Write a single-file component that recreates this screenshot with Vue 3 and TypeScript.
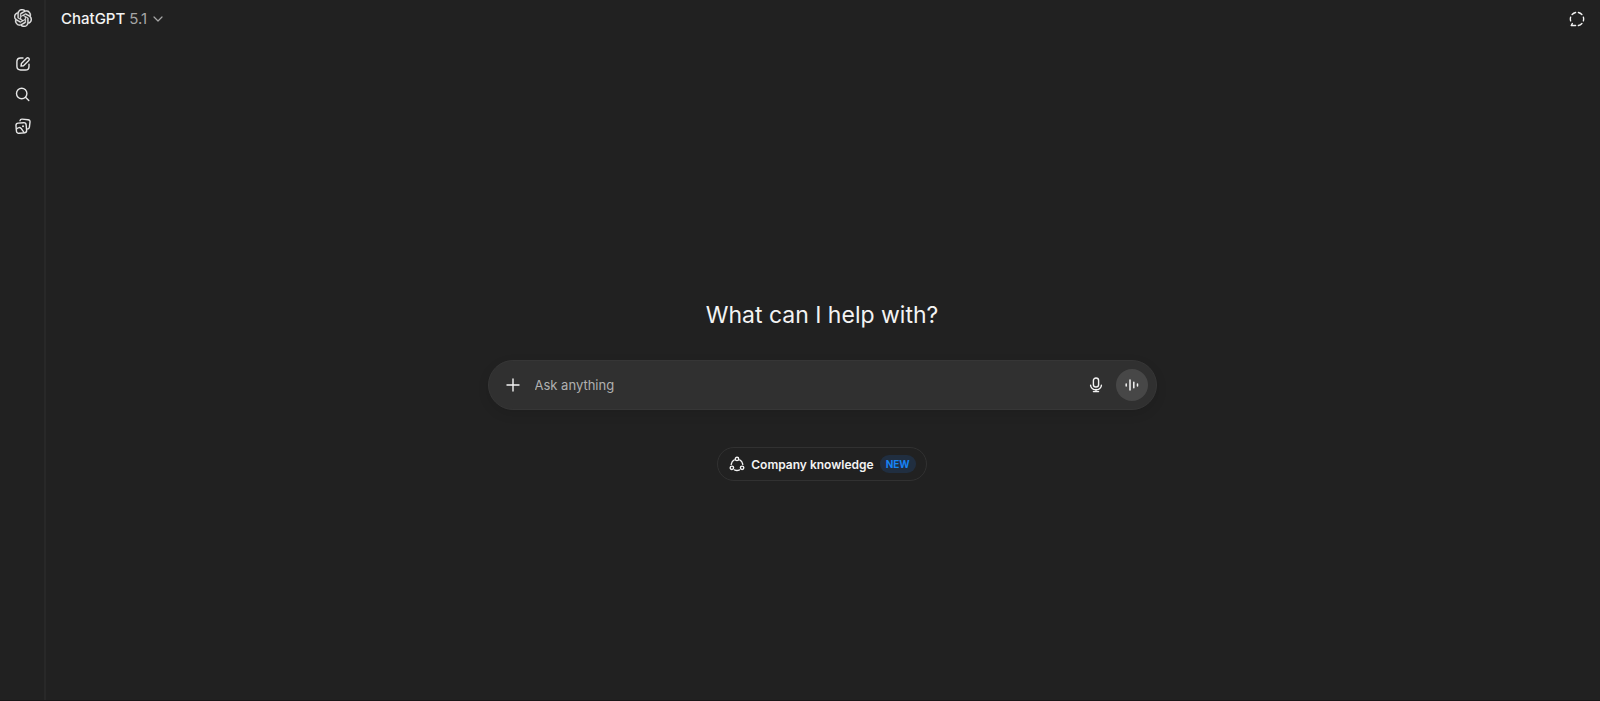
<script setup lang="ts">
import { ref } from 'vue'

const model = { name: 'ChatGPT', version: '5.1' }
const prompt = ref('')
</script>

<template>
  <div class="app">
    <nav class="rail" aria-label="Sidebar">
      <a class="rail-item logo" href="#" aria-label="Home">
        <svg class="logo-icon" viewBox="0 0 24 24" fill="currentColor" stroke="currentColor" stroke-width="0.4">
          <path d="M22.2819 9.8211a5.9847 5.9847 0 0 0-.5157-4.9108 6.0462 6.0462 0 0 0-6.5098-2.9A6.0651 6.0651 0 0 0 4.9807 4.1818a5.9847 5.9847 0 0 0-3.9977 2.9 6.0462 6.0462 0 0 0 .7427 7.0966 5.98 5.98 0 0 0 .511 4.9107 6.051 6.051 0 0 0 6.5146 2.9001A5.9847 5.9847 0 0 0 13.2599 24a6.0557 6.0557 0 0 0 5.7718-4.2058 5.9894 5.9894 0 0 0 3.9977-2.9001 6.0557 6.0557 0 0 0-.7475-7.073zm-9.022 12.6081a4.4755 4.4755 0 0 1-2.8764-1.0408l.1419-.0804 4.7783-2.7582a.7948.7948 0 0 0 .3927-.6813v-6.7369l2.02 1.1686a.071.071 0 0 1 .038.052v5.5826a4.504 4.504 0 0 1-4.4945 4.4944zm-9.6607-4.1254a4.4708 4.4708 0 0 1-.5346-3.0137l.142.0852 4.783 2.7582a.7712.7712 0 0 0 .7806 0l5.8428-3.3685v2.3324a.0804.0804 0 0 1-.0332.0615L9.74 19.9502a4.4992 4.4992 0 0 1-6.1408-1.6464zM2.3408 7.8956a4.485 4.485 0 0 1 2.3655-1.9728V11.6a.7664.7664 0 0 0 .3879.6765l5.8144 3.3543-2.0201 1.1685a.0757.0757 0 0 1-.071 0l-4.8303-2.7865A4.504 4.504 0 0 1 2.3408 7.872zm16.5963 3.8558L13.1038 8.364 15.1192 7.2a.0757.0757 0 0 1 .071 0l4.8303 2.7913a4.4944 4.4944 0 0 1-.6765 8.1042v-5.6772a.79.79 0 0 0-.407-.667zm2.0107-3.0231l-.142-.0852-4.7735-2.7818a.7759.7759 0 0 0-.7854 0L9.409 9.2297V6.8974a.0662.0662 0 0 1 .0284-.0615l4.8303-2.7866a4.4992 4.4992 0 0 1 6.6802 4.66zM8.3065 12.863l-2.02-1.1638a.0804.0804 0 0 1-.038-.0567V6.0742a4.4992 4.4992 0 0 1 7.3757-3.4537l-.142.0805L8.704 5.459a.7948.7948 0 0 0-.3927.6813zm1.0976-2.3654l2.602-1.4998 2.6069 1.4998v2.9994l-2.5974 1.4997-2.6067-1.4997Z" />
        </svg>
      </a>
      <button class="rail-item" type="button" aria-label="New chat">
        <svg class="icon" viewBox="0 0 16 16">
          <path d="M8 2H5.600C3.100 2 1.900 3.200 1.900 5.600v4.700C1.900 12.800 3.100 14 5.600 14h4.700c2.500 0 3.700-1.200 3.700-3.600V8.200" />
          <path d="M6 10.100l.4-2.500 5.200-5.300a1.500 1.500 0 0 1 2.200 2.200L8.500 9.700z" />
        </svg>
      </button>
      <button class="rail-item" type="button" aria-label="Search chats">
        <svg class="icon" viewBox="0 0 16 16">
          <circle cx="6.700" cy="6.500" r="5.200" />
          <path d="M10.500 10.300l3.300 3.300" />
        </svg>
      </button>
      <button class="rail-item" type="button" aria-label="Library">
        <svg class="icon" viewBox="0 0 16 16">
          <path d="M5 2.700C5.200 1.500 6 1 7.200 1.100l5.800.6c1.500.2 2.200 1 2 2.400l-.6 5c-.2 1.200-.8 1.800-1.700 1.900" />
          <rect x="1.200" y="4.900" width="10.200" height="10.200" rx="2.400" transform="rotate(-5 6.300 10)" />
          <path d="M1.500 11c1.800-1.700 3.400-1.900 4.700-.5 1 1.100 1.700 2.700 2.900 4.100" />
          <circle class="solid" cx="8" cy="8.200" r="1" />
        </svg>
      </button>
    </nav>

    <div class="page">
      <header class="topbar">
        <button class="model" type="button">
          <span>{{ model.name }} <span class="version">{{ model.version }}</span></span>
          <svg class="chevron" viewBox="0 0 10 10"><path d="M1 3l4 4 4-4" /></svg>
        </button>
        <button class="temporary" type="button" aria-label="Temporary chat">
          <svg class="icon" viewBox="0 0 16 16">
            <path d="M9.400 1.500a6.700 6.700 0 0 1 3.500 2M14.400 6.100a6.700 6.700 0 0 1 0 3.800M12.900 12.500a6.700 6.700 0 0 1-3.500 2M6.600 14.500H2.200l1.100-1.900M1.600 9.900a6.700 6.700 0 0 1 0-3.800M3.100 3.500a6.700 6.700 0 0 1 3.500-2" />
          </svg>
        </button>
      </header>

      <main class="content">
        <h1>What can I help with?</h1>
        <form class="composer" @submit.prevent>
          <button class="tool" type="button" aria-label="Add files">
            <svg class="icon" viewBox="0 0 16 16"><path d="M8 2v12M2 8h12" /></svg>
          </button>
          <input v-model="prompt" type="text" placeholder="Ask anything" aria-label="Ask anything" />
          <button class="tool" type="button" aria-label="Dictate">
            <svg class="icon" viewBox="0 0 16 16">
              <rect x="5.400" y="1" width="5.200" height="9" rx="2.600" />
              <path d="M2.600 8.200a5.400 4.600 0 0 0 10.800 0M8 12.400v2M5.400 14.600h5.200" />
            </svg>
          </button>
          <button class="voice" type="button" aria-label="Use voice mode">
            <svg class="icon bars" viewBox="0 0 16 16">
              <path d="M2.200 7v2M6 3v10M9.800 5.200v5.600M13.500 7v2" />
            </svg>
          </button>
        </form>
        <button class="suggestion" type="button">
          <svg class="icon" viewBox="0 0 16 16">
            <circle cx="8" cy="2.900" r="1.700" />
            <circle cx="2.900" cy="11.800" r="1.700" />
            <circle cx="13.100" cy="11.800" r="1.700" />
            <path d="M5.300 3.900A5.800 5.800 0 0 0 2.200 8.300M10.700 3.900a5.800 5.800 0 0 1 3.100 4.400M5.500 13.900a6 6 0 0 0 5 0" />
          </svg>
          <span>Company knowledge</span>
          <span class="badge">NEW</span>
        </button>
      </main>
    </div>
  </div>
</template>

<style>
body {
  background: #212121;
}
</style>

<style scoped>
.app {
  display: flex;
  box-sizing: border-box;
  min-height: 100vh;
  border-bottom: 1px solid #181618;
  background: #212121;
  color: #f3f3f3;
  font-family: Inter, "Liberation Sans", sans-serif;
}

button {
  display: flex;
  align-items: center;
  justify-content: center;
  padding: 0;
  border: 0;
  background: none;
  color: inherit;
  font: inherit;
  cursor: pointer;
}

.icon {
  display: block;
  flex: none;
  width: 16px;
  height: 16px;
  fill: none;
  stroke: currentColor;
  stroke-width: 1.4;
  stroke-linecap: round;
  stroke-linejoin: round;
}

.icon .solid {
  fill: currentColor;
  stroke: none;
}

.rail {
  display: flex;
  flex: none;
  flex-direction: column;
  align-items: center;
  width: 42px;
  padding-left: 2px;
  border-right: 2px solid #282828;
  color: #e6e6e6;
}

.rail-item {
  display: flex;
  align-items: center;
  justify-content: center;
  width: 32px;
  height: 31px;
}

.logo {
  height: 36px;
  margin-bottom: 12px;
  color: inherit;
}

.logo-icon {
  width: 18px;
  height: 18px;
}

.page {
  display: flex;
  flex: 1;
  flex-direction: column;
  min-width: 0;
}

.topbar {
  display: flex;
  align-items: center;
  justify-content: space-between;
  height: 37px;
  padding: 0 15px;
}

.model {
  gap: 6px;
  font-size: 15px;
  font-weight: 500;
  line-height: 25px;
}

.version {
  color: #a6a6a6;
  font-weight: 400;
}

.chevron {
  width: 10px;
  height: 10px;
  fill: none;
  stroke: #a6a6a6;
  stroke-width: 1.2;
  stroke-linecap: round;
  stroke-linejoin: round;
}

.content {
  display: flex;
  flex: 1;
  flex-direction: column;
  align-items: center;
  justify-content: center;
  padding: 43px 26px 0 24px;
}

h1 {
  margin: 0 0 29px;
  font-size: 23px;
  font-weight: 400;
  line-height: 32px;
}

.composer {
  display: flex;
  align-items: center;
  box-sizing: border-box;
  width: 100%;
  max-width: 669px;
  height: 50px;
  margin-bottom: 37px;
  padding: 0 8px;
  border: 1px solid #363636;
  border-radius: 25px;
  background: #303030;
  box-shadow: 0 4px 12px rgba(0, 0, 0, 0.1);
}

.tool,
.voice {
  flex: none;
  width: 32px;
  height: 32px;
}

.voice {
  margin-left: 4px;
  border-radius: 50%;
  background: #474747;
}

.bars {
  stroke-width: 1.5;
}

input {
  flex: 1;
  min-width: 0;
  padding: 0 6px;
  border: 0;
  outline: 0;
  background: none;
  color: inherit;
  font: inherit;
  font-size: 13px;
  line-height: 20px;
}

input::placeholder {
  color: #b0b0b0;
  opacity: 1;
}

.suggestion {
  gap: 6px;
  height: 34px;
  padding: 0 10px 0 11px;
  border: 1px solid #313131;
  border-radius: 17px;
  font-size: 12px;
  font-weight: 600;
}

.badge {
  padding: 0 6px;
  border-radius: 9px;
  background: #202e40;
  color: #1784f5;
  font-size: 10px;
  font-weight: 700;
  line-height: 18px;
}
</style>
